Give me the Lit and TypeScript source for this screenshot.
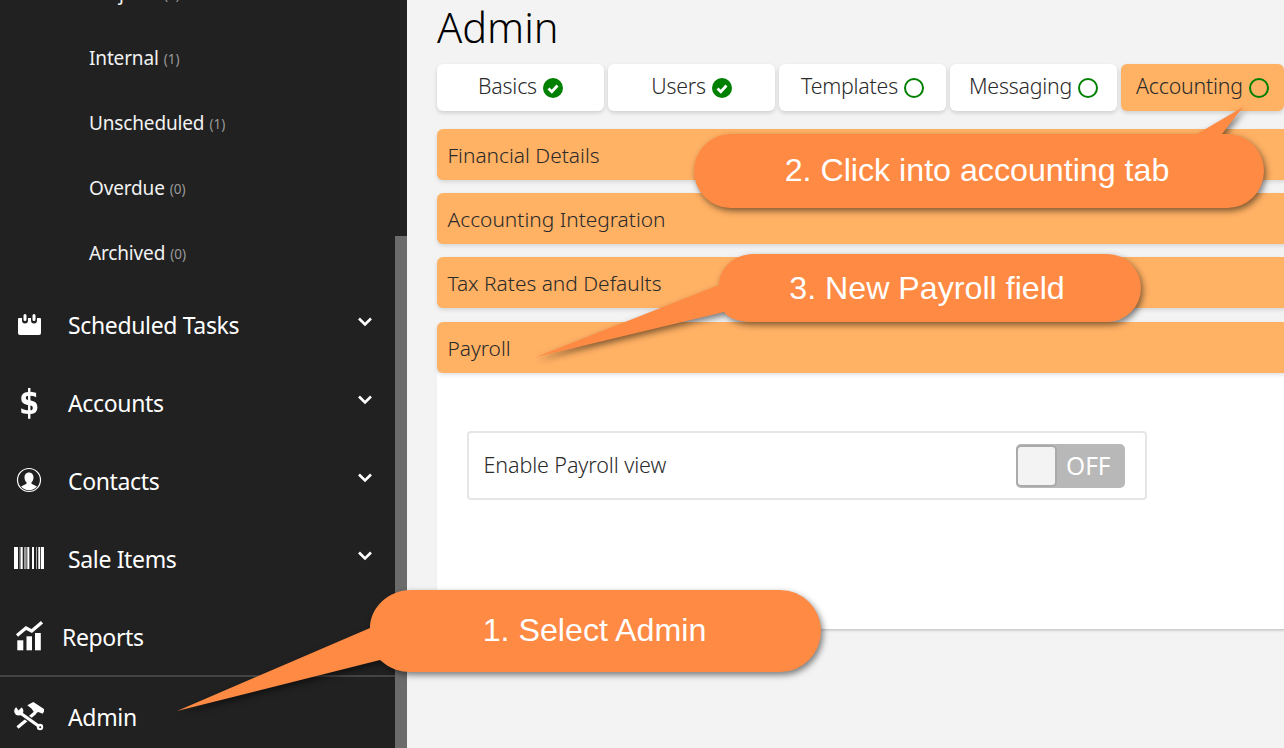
import { LitElement, html, css, svg } from "lit";
import { customElement } from "lit/decorators.js";

const chevron = html`<svg class="chev" width="16" height="10" viewBox="0 0 16 10"><path d="M2 1.500 L8 7.500 L14 1.500" fill="none" stroke="#fff" stroke-width="2.600"/></svg>`;

const icons: Record<string, unknown> = {
  cal: html`<svg class="icon" width="30" height="30" viewBox="0 0 30 30"><path fill="#fff" d="M5.500 9h21a1 1 0 0 1 1 1v14a2 2 0 0 1-2 2h-19a2 2 0 0 1-2-2V9.500z" transform="translate(-.5 0)"/><g fill="none" stroke-linecap="round"><path d="M11 6.500v5M20 6.500v5" stroke="#212121" stroke-width="6"/><path d="M11 6.500v4M20 6.500v4" stroke="#fff" stroke-width="3"/></g></svg>`,
  dollar: html`<span class="icon dollar">$</span>`,
  user: html`<svg class="icon" width="30" height="30" viewBox="0 0 30 30"><circle cx="15" cy="15" r="11.500" fill="none" stroke="#fff" stroke-width="1.200"/><path fill="#fff" d="M15 7.500c3 0 4.500 2.300 4.500 5 0 2-.8 3.800-2 4.800v1.500l5.500 2.700a10.300 10.300 0 0 1-16 0l5.500-2.700v-1.500c-1.200-1-2-2.800-2-4.800 0-2.700 1.500-5 4.500-5z"/></svg>`,
  barcode: html`<svg class="icon" width="30" height="30" viewBox="0 0 30 30"><g fill="#fff"><rect x="0" y="4" width="4" height="22"/><rect x="5.500" y="4" width="1" height="22" opacity=".6"/><rect x="6.700" y="4" width="2" height="22"/><rect x="10" y="4" width="2.700" height="22" opacity=".55"/><rect x="13.300" y="4" width="2" height="22"/><rect x="18" y="4" width="2" height="22"/><rect x="22" y="4" width="1" height="22" opacity=".6"/><rect x="24.300" y="4" width="1.700" height="22"/><rect x="26.800" y="4" width="3.200" height="22"/></g></svg>`,
  chart: html`<svg class="icon" width="30" height="30" viewBox="0 0 30 30"><g fill="#fff"><rect x="3.300" y="19.300" width="6" height="10"/><rect x="12.500" y="15.300" width="5.500" height="14"/><rect x="21" y="12" width="5.800" height="17.300"/></g><path d="M3 14.500 L12 7 L17.700 10 L28 1.200" fill="none" stroke="#fff" stroke-width="3.200"/></svg>`,
  tools: html`<svg class="icon" width="30" height="30" viewBox="0 0 30 30"><path fill="#fff" d="M13.300 4.300 L19.300 1 L31 8.700 L28.700 12.700 L24.300 11 L21 12.700 L17.700 7.700z"/><path d="M21.500 11.500 L3.500 26.500" stroke="#fff" stroke-width="3.200" fill="none"/><path d="M7 12.500 L26 26" stroke="#212121" stroke-width="5.400" fill="none"/><path d="M7 12.500 L26 26" stroke="#fff" stroke-width="3.200" fill="none"/><circle cx="4.800" cy="10" r="4.600" fill="#fff"/><path d="M0 3 L4.500 9.500 L8 6 L3 2z" fill="#212121"/><circle cx="26" cy="26" r="3.200" fill="#fff"/><circle cx="26.200" cy="26.200" r="1" fill="#212121"/></svg>`,
};

@customElement("side-nav")
class SideNav extends LitElement {
  static styles = css`
    :host { display: flex; width: 407px; height: 748px; background: #212121; flex: none; overflow: hidden; font-family: "Noto Sans", sans-serif; color: #fff; }
    .list { width: 395px; margin-top: -40px; flex: none; }
    .sub { height: 65px; display: flex; align-items: center; padding-left: 89px; font-size: 19px; letter-spacing: -.15px; color: #f2f2f2; }
    .count { font-size: 13.500px; color: #9a9a9a; margin-left: 5px; margin-top: 2px; letter-spacing: 0; }
    .row { height: 78px; display: flex; align-items: center; padding-left: 14px; font-size: 23px; letter-spacing: -.35px; }
    .row .label { margin-left: 24px; flex: 1; padding-top: 2px; }
    .row.narrow .label { margin-left: 18px; }
    .chev { margin-right: 22px; margin-top: -4px; }
    .icon { display: block; width: 30px; height: 30px; flex: none; }
    .dollar { font: bold 34px/30px "DejaVu Sans", sans-serif; text-align: center; transform: scaleX(.86); }
    .sep { height: 2px; background: #444; }
    .track { width: 12px; flex: none; padding-top: 236px; box-sizing: border-box; }
    .thumb { height: 512px; background: #6b6b6b; }
  `;
  render() {
    const subs = [["Projects", 1], ["Internal", 1], ["Unscheduled", 1], ["Overdue", 0], ["Archived", 0]];
    const rows = [["Scheduled Tasks", "cal", 1], ["Accounts", "dollar", 1], ["Contacts", "user", 1], ["Sale Items", "barcode", 1]];
    return html`<div class="list">
      ${subs.map(([n, c]) => html`<div class="sub">${n}<span class="count">(${c})</span></div>`)}
      ${rows.map(([n, i]) => html`<div class="row">${icons[i as string]}<span class="label">${n}</span>${chevron}</div>`)}
      <div class="row narrow">${icons.chart}<span class="label">Reports</span></div>
      <div class="sep"></div>
      <div class="row">${icons.tools}<span class="label">Admin</span></div>
    </div>
    <div class="track"><div class="thumb"></div></div>`;
  }
}

@customElement("admin-main")
class AdminMain extends LitElement {
  static styles = css`
    :host { display: block; flex: 1; min-width: 0; height: 748px; background: #f3f3f3; overflow: hidden; padding-left: 30px; box-sizing: border-box; font-family: "Noto Sans", sans-serif; color: #2a2a2a; }
    h1 { margin: 0; height: 64px; font-size: 41.500px; line-height: 55px; font-weight: 300; color: #000; }
    .tabs { display: flex; gap: 4px; margin-bottom: 18px; }
    .tab { width: 167px; height: 47px; background: #fff; border-radius: 6px; box-shadow: 0 2px 4px rgba(0,0,0,.15); display: flex; align-items: center; justify-content: center; gap: 6px; font-size: 21.300px; font-weight: 300; box-sizing: border-box; padding-bottom: 5px; letter-spacing: -.2px; }
    .tab.active { width: 163px; background: #ffb164; }
    .mark { width: 20px; height: 20px; flex: none; margin-top: 6px; }
    .bar { height: 51px; background: #ffb164; border-radius: 6px 0 0 6px; margin-right: -10px; margin-bottom: 13px; padding-left: 10.500px; display: flex; align-items: center; font-size: 20.900px; font-weight: 300; box-shadow: 0 2px 4px rgba(0,0,0,.12); }
    .bar.wide { margin-bottom: 14px; }
    .bar.last { margin-bottom: 0; position: relative; }
    .panel { height: 256px; background: #fff; box-sizing: border-box; padding: 58px 30px; margin-right: -10px; box-shadow: 0 3px 3px -2px rgba(0,0,0,.25); }
    .setting { width: 680px; height: 69px; box-sizing: border-box; border: 2px solid #e6e6e6; border-radius: 4px; display: flex; align-items: center; justify-content: space-between; padding: 0 20px 2px 14.500px; font-size: 21.500px; font-weight: 300; letter-spacing: -.1px; }
    .toggle { width: 109px; height: 44px; box-sizing: border-box; background: #b8b8b8; border-radius: 5px; display: flex; align-items: center; color: #fff; font-size: 24.500px; font-weight: 400; letter-spacing: 0; margin-top: 2px; }
    .knob { width: 41px; height: 42px; box-sizing: border-box; background: #f3f3f3; border: 2px solid #aaa; border-radius: 5px; margin-right: 9px; }
  `;
  render() {
    const check = html`<svg class="mark" viewBox="0 0 20 20"><circle cx="10" cy="10" r="10" fill="#008000"/><path d="M5.500 10.500 L8.800 13.800 L14.500 7.500" fill="none" stroke="#fff" stroke-width="2.800"/></svg>`;
    const open = html`<svg class="mark" viewBox="0 0 20 20"><circle cx="10" cy="10" r="9" fill="none" stroke="#008000" stroke-width="2"/></svg>`;
    return html`<h1>Admin</h1>
      <div class="tabs">
        <div class="tab">Basics ${check}</div>
        <div class="tab">Users ${check}</div>
        <div class="tab">Templates ${open}</div>
        <div class="tab">Messaging ${open}</div>
        <div class="tab active">Accounting ${open}</div>
      </div>
      <div class="bar">Financial Details</div>
      <div class="bar">Accounting Integration</div>
      <div class="bar wide">Tax Rates and Defaults</div>
      <div class="bar last">Payroll</div>
      <div class="panel">
        <div class="setting">Enable Payroll view
          <div class="toggle"><div class="knob"></div>OFF</div>
        </div>
      </div>`;
  }
}

@customElement("app-root")
class AppRoot extends LitElement {
  static styles = css`
    :host { display: flex; width: 1284px; height: 748px; position: relative; overflow: hidden; }
    .notes { position: absolute; inset: 0; pointer-events: none; }
    .shape { fill: #ff8a44; filter: drop-shadow(2px 3px 3px rgba(0,0,0,.5)); }
    text { font-family: "Liberation Sans", Arial, sans-serif; fill: #fff; font-size: 32.200px; text-anchor: middle; dominant-baseline: central; }
  `;
  render() {
    return html`<side-nav></side-nav><admin-main></admin-main>
      <svg class="notes" width="1284" height="748" viewBox="0 0 1284 748">
        ${svg`
        <path class="shape" d="M1197 134 L1243 107 L1222 134 L1227 134 A37 37 0 0 1 1227 208 L731 208 A37 37 0 0 1 731 134 Z"/>
        <text x="977" y="170">2. Click into accounting tab</text>
        <path class="shape" d="M719 285 L536 357 L724 312 C730 320 742 322 753 322 L1107 322 A34 34 0 0 0 1107 254 L753 254 C735 254 719 268 719 285 Z"/>
        <text x="927" y="288">3. New Payroll field</text>
        <path class="shape" d="M370 628 L177 711 L380 660 C390 669 400 672 411 672 L780 672 A41 41 0 0 0 780 590 L411 590 C388 590 370 608 370 628 Z"/>
        <text x="594.500" y="630">1. Select Admin</text>
        `}
      </svg>`;
  }
}
